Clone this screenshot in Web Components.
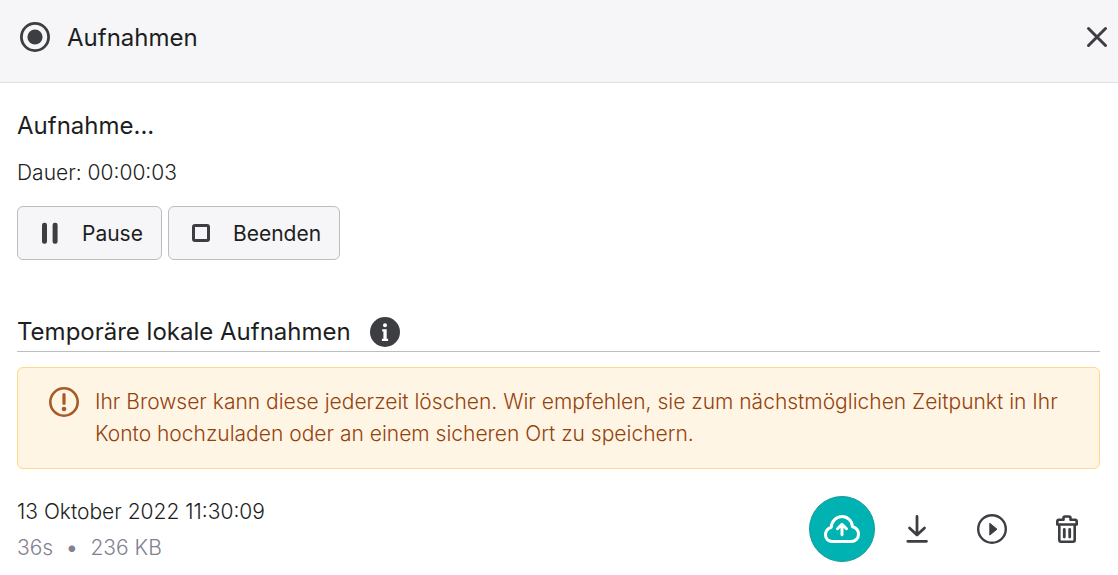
<!DOCTYPE html>
<html lang="de">
<head>
<meta charset="utf-8">
<title>Aufnahmen</title>
<style>
body { margin: 0; background: #fff; color: #1d1e22; font: 300 21px/32px Inter, "Liberation Sans", sans-serif; }
</style>
</head>
<body>
<recordings-panel></recordings-panel>
<script>
const define = (name, html) => {
  const template = document.createElement('template');
  template.innerHTML = html;
  customElements.define(name, class extends HTMLElement {
    constructor() {
      super();
      this.attachShadow({ mode: 'open' }).append(template.content.cloneNode(true));
    }
  });
};

const icons = {
  record: '<circle cx="15" cy="15" r="13.6" fill="none" stroke="currentColor" stroke-width="2.8"/><circle cx="15" cy="15" r="7.6" fill="currentColor"/>',
  close: '<path d="M6.5 6.5l17 17M23.5 6.5l-17 17" fill="none" stroke="currentColor" stroke-width="3" stroke-linecap="round"/>',
  pause: '<rect x="7" y="4.700" width="5" height="21" rx="2.200" fill="currentColor"/><rect x="17.600" y="4.700" width="5" height="21" rx="2.200" fill="currentColor"/>',
  stop: '<rect x="7.500" y="7.500" width="15" height="15" rx="1.500" fill="none" stroke="currentColor" stroke-width="3"/>',
  info: '<circle cx="15" cy="15" r="15" fill="currentColor"/><circle cx="15" cy="8.200" r="2" fill="#fff"/><path d="M12.200 12.200h4.500v9.600h1.400v2.200h-6.200v-2.200h1.500v-7.300h-1.200z" fill="#fff"/>',
  warning: '<circle cx="15" cy="15" r="13.700" fill="none" stroke="currentColor" stroke-width="2.600"/><path d="M15 7.500v8.800" stroke="currentColor" stroke-width="3.200" stroke-linecap="round"/><circle cx="15" cy="22" r="2.300" fill="currentColor"/>',
  download: '<path d="M15 2.500v18M7.500 14l7.500 7L22.500 14M5.800 27.300h18.700" fill="none" stroke="currentColor" stroke-width="2.800" stroke-linecap="round" stroke-linejoin="round"/>',
  play: '<circle cx="15" cy="15" r="13.800" fill="none" stroke="currentColor" stroke-width="2.400"/><path d="M12.800 9.300v11.800l7.200-5.900z" fill="currentColor" stroke="currentColor" stroke-linejoin="round"/>',
  trash: '<path d="M5.300 7.500q0-1.700 1.700-1.700h4.500V4q0-1.500 1.500-1.500h4Q18.500 2.500 18.500 4v1.800H23q1.700 0 1.700 1.700v3H5.300zM7.300 10.500V26q0 1.700 1.700 1.700h12q1.700 0 1.700-1.700V10.500" fill="none" stroke="currentColor" stroke-width="2.600" stroke-linejoin="round"/><path d="M12.300 15.500v7.500M17.700 15.500v7.500" stroke="currentColor" stroke-width="2.800" stroke-linecap="round"/>',
  upload: '<path d="M8.300 30.500C4.300 30.500 1.500 27.600 1.500 24c0-3.700 2.300-6.600 5.700-7.600C7.600 10.200 12.300 5.500 18 5.500s10.200 4.500 10.500 10.200c3.500.9 6 3.900 6 7.500 0 4.200-3.200 7.300-7.300 7.300z" fill="none" stroke="currentColor" stroke-width="3" stroke-linejoin="round"/><path d="M18 23.800V13.500M13.500 17.700l4.500-4.400 4.500 4.400" fill="none" stroke="currentColor" stroke-width="3" stroke-linecap="round" stroke-linejoin="round"/>'
};

customElements.define('ui-icon', class extends HTMLElement {
  constructor() { super(); this.attachShadow({ mode: 'open' }); }
  connectedCallback() {
    const name = this.getAttribute('name');
    const size = name === 'upload' ? 36 : 30;
    this.shadowRoot.innerHTML = `<style>
      :host { display: block; flex: none; color: #3d3e42; }
      svg { display: block; }
    </style><svg width="${size}" height="${size}" viewBox="0 0 ${size} ${size}" aria-hidden="true">${icons[name]}</svg>`;
  }
});

define('panel-header', `<style>
  :host { display: flex; align-items: center; gap: 17px; height: 82px; padding: 0 6px 8px 20px; box-sizing: border-box;
    background: #f6f6f9; box-shadow: 0 1px #e0e0e4; font-weight: 400; }
  h1 { flex: 1; margin: 0; padding-top: 2px; font: inherit; font-size: 24px; }
  button { padding: 0; border: 0; background: none; }
</style><ui-icon name="record"></ui-icon><h1><slot></slot></h1>
<button type="button" aria-label="Schließen"><ui-icon name="close"></ui-icon></button>`);

define('action-button', `<style>
  :host { display: block; }
  button { display: flex; align-items: center; gap: 17px; height: 54px; padding: 0 18px 0 17px; border: 1px solid #bcbdbf;
    border-radius: 6px; background: #f6f6f9; color: inherit; font: inherit; font-weight: 400; }
  span { padding-top: 2px; }
</style><button type="button"><slot name="icon"></slot><span><slot></slot></span></button>`);

define('recording-status', `<style>
  :host { display: block; }
  h2 { margin: 0 0 15px; font-size: 24px; font-weight: 400; }
  p { margin: 0 0 17px; }
  div { display: flex; gap: 6px; }
</style><h2>Aufnahme...</h2><p>Dauer: 00:00:03</p>
<div>
  <action-button><ui-icon slot="icon" name="pause"></ui-icon>Pause</action-button>
  <action-button><ui-icon slot="icon" name="stop"></ui-icon>Beenden</action-button>
</div>`);

define('section-heading', `<style>
  :host { display: flex; align-items: center; gap: 19px; padding-bottom: 3px; border-bottom: 1px solid #bcbdbf; }
  h2 { margin: 0; font-size: 24px; font-weight: 400; }
</style><h2><slot></slot></h2><ui-icon name="info"></ui-icon>`);

define('warning-box', `<style>
  :host { display: flex; align-items: flex-start; gap: 16px; padding: 18px 30px 18px 31px; border: 1px solid #ffd98c;
    border-radius: 6px; background: #fff5e5; color: #94420c; }
  ui-icon { color: #a65a26; margin-top: 1px; }
  p { margin: 0; }
</style><ui-icon name="warning"></ui-icon><p><slot></slot></p>`);

define('icon-button', `<style>
  :host { display: block; }
  button { display: grid; place-items: center; width: 66px; height: 66px; padding: 0; border: 0; border-radius: 50%; background: none; }
  :host([primary]) button { background: #00b2b2; border: 1px solid #189a9c; }
  ::slotted(ui-icon) { color: var(--icon, #3d3e42); }
  :host([primary]) { --icon: #fff; }
</style><button type="button"><slot></slot></button>`);

define('recording-row', `<style>
  :host { display: flex; align-items: center; justify-content: space-between; }
  p { margin: 0; }
  .text { padding-top: 2px; }
  .meta { display: flex; gap: 13px; margin-top: 4px; color: #82818f; }
  .dot { font-weight: 500; }
  .actions { display: flex; gap: 9px; }
</style>
<div class="text"><p><slot></slot></p><p class="meta"><slot name="duration"></slot><span class="dot">•</span><slot name="size"></slot></p></div>
<div class="actions">
  <icon-button primary><ui-icon name="upload"></ui-icon></icon-button>
  <icon-button><ui-icon name="download"></ui-icon></icon-button>
  <icon-button><ui-icon name="play"></ui-icon></icon-button>
  <icon-button><ui-icon name="trash"></ui-icon></icon-button>
</div>`);

// The actions carry only an icon, so each inner button gets a spoken name.
const actionLabels = { upload: 'Hochladen', download: 'Herunterladen', play: 'Abspielen', trash: 'Löschen' };

define('recordings-panel', `<style>
  :host { display: block; }
  main { padding: 28px 18px 11px 17px; }
  section-heading { margin-top: 56px; }
  warning-box { margin-top: 15px; }
  recording-row { margin-top: 25px; }
</style>
<panel-header>Aufnahmen</panel-header>
<main>
  <recording-status></recording-status>
  <section-heading>Temporäre lokale Aufnahmen</section-heading>
  <warning-box>Ihr Browser kann diese jederzeit löschen. Wir empfehlen, sie zum nächstmöglichen Zeitpunkt in Ihr Konto hochzuladen oder an einem sicheren Ort zu speichern.</warning-box>
  <recording-row>13 Oktober 2022 11:30:09<span slot="duration">36s</span><span slot="size">236 KB</span></recording-row>
</main>`);

const row = document.querySelector('recordings-panel').shadowRoot.querySelector('recording-row');
for (const item of row.shadowRoot.querySelectorAll('icon-button')) {
  const name = item.querySelector('ui-icon').getAttribute('name');
  item.shadowRoot.querySelector('button').setAttribute('aria-label', actionLabels[name]);
}
</script>
</body>
</html>
